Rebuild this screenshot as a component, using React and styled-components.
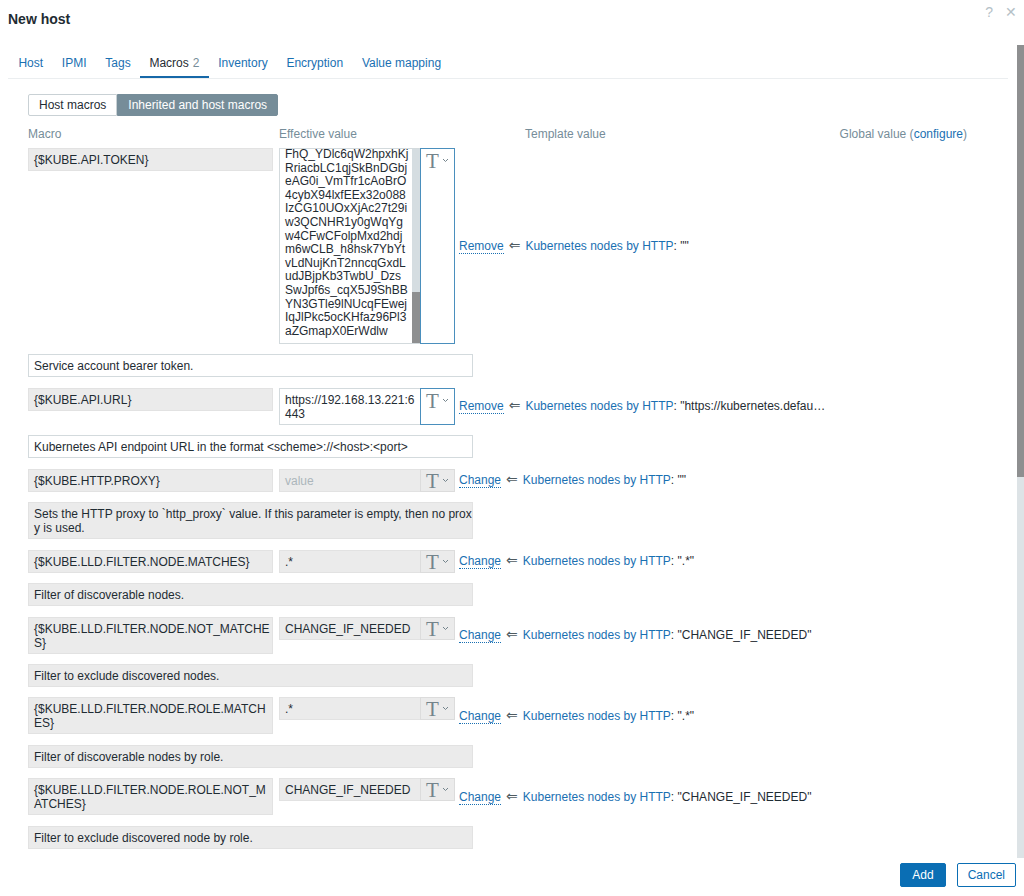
import React from "react";
import styled, { createGlobalStyle } from "styled-components";

const GlobalStyle = createGlobalStyle`
  html, body {
    margin: 0;
    padding: 0;
    background: #fff;
  }
  body {
    font-family: "Liberation Sans", Arial, sans-serif;
    font-size: 12px;
    color: #1f2c33;
  }
`;

const LINK = "#1a70b2";
const MUTED = "#768d99";

const Dialog = styled.div`
  width: 1024px;
  height: 896px;
  display: flex;
  flex-direction: column;
  overflow: hidden;
`;

const Header = styled.div`
  height: 45px;
  display: flex;
  justify-content: space-between;
  align-items: flex-start;
  padding: 10px 7px 0 8px;
  box-sizing: border-box;
`;

const Title = styled.h4`
  margin: 0;
  font-size: 14px;
  line-height: 18px;
  font-weight: bold;
  color: #1f2c33;
`;

const HeaderControls = styled.div`
  display: flex;
  gap: 12px;
  margin-top: -6px;
  color: #b5c1c7;
  font-size: 14px;
  line-height: 16px;
`;

const Body = styled.div`
  height: 813px;
  display: flex;
  padding-left: 8px;
`;

const Content = styled.div`
  flex: 1;
  overflow: hidden;
`;

const ScrollTrack = styled.div`
  width: 7px;
  margin-left: 9px;
  background: #dde3e6;
  display: flex;
  flex-direction: column;
`;

const ScrollThumb = styled.div`
  height: ${(p) => p.$size}px;
  background: #8e8f90;
`;

const Tabs = styled.ul`
  list-style: none;
  margin: 0;
  padding: 0 0 0 1px;
  height: 33px;
  display: flex;
  border-bottom: 1px solid #ebeef0;
`;

const Tab = styled.li`
  padding: 11px 9.4px 0;
  line-height: 14px;
  height: 20px;
  color: ${(p) => (p.$active ? "#1f2c33" : LINK)};
  border-bottom: 2px solid ${(p) => (p.$active ? "#1668a8" : "transparent")};
`;

const Counter = styled.span`
  color: ${MUTED};
  margin-left: 4px;
`;

const Form = styled.div`
  padding: 15px 0 0 20px;
`;

const Segmented = styled.div`
  display: flex;
`;

const SegButton = styled.div`
  height: 22px;
  box-sizing: border-box;
  padding: 0 10px;
  line-height: 20px;
  border: 1px solid ${(p) => (p.$on ? MUTED : "#c9d1d5")};
  background: ${(p) => (p.$on ? MUTED : "#fff")};
  color: ${(p) => (p.$on ? "#fff" : "#1f2c33")};
  border-radius: ${(p) => (p.$first ? "2px 0 0 2px" : "0 2px 2px 0")};
`;

const ColumnHeads = styled.div`
  display: grid;
  grid-template-columns: 251px 246px 1fr auto;
  margin: 11px 41px 7px 0;
  line-height: 14px;
  color: ${MUTED};
`;

const List = styled.div`
  display: flex;
  flex-direction: column;
  gap: 10.45px;
`;

const Row = styled.div`
  display: flex;
  align-items: flex-start;
`;

const Field = styled.div`
  box-sizing: border-box;
  padding: 4px 5px 3px;
  line-height: 14px;
  border: 1px solid ${(p) => (p.$readonly ? "#e2e2e2" : "#d3dadd")};
  background: ${(p) => (p.$readonly ? "#ebebeb" : "#fff")};
  white-space: pre;
  color: ${(p) => (p.$placeholder ? "#acb6bb" : "#1f2c33")};
`;

const MacroName = styled(Field)`
  width: 245px;
`;

const Description = styled(Field)`
  width: 445px;
`;

const ValueGroup = styled.div`
  display: flex;
  width: 176px;
  margin-left: 6px;
`;

const ValueInput = styled(Field)`
  flex: 1;
  border-right: none;
`;

const TextArea = styled.div`
  flex: 1;
  height: 196px;
  box-sizing: border-box;
  border: 1px solid #d3dadd;
  border-right: none;
  display: flex;
  overflow: hidden;
`;

const AreaText = styled.div`
  flex: 1;
  padding-left: 5px;
  margin-top: -1px;
  line-height: 13.6px;
  white-space: pre;
  overflow: hidden;
`;

const AreaScroll = styled.div`
  width: 8px;
  background: #d5dde1;
  display: flex;
  flex-direction: column;
  justify-content: flex-end;
`;

const AreaThumb = styled.div`
  height: 51px;
  background: #8e8f90;
`;

const TypeButton = styled.div`
  width: 35px;
  box-sizing: border-box;
  display: flex;
  align-items: flex-start;
  justify-content: center;
  gap: 3px;
  padding-top: ${(p) => (p.$active ? "2px" : "1px")};
  border: 1px solid ${(p) => (p.$active ? "#4a8fbd" : "#dcdcdc")};
  background: ${(p) => (p.$active ? "#fff" : "#ebebeb")};
  height: ${(p) => (p.$active ? "auto" : "23px")};
  align-self: stretch;
`;

const TypeGlyph = styled.span`
  font-family: "Liberation Serif", "Times New Roman", serif;
  font-size: 21px;
  line-height: 20px;
  color: #74848c;
`;

const Action = styled.div`
  align-self: center;
  margin-left: 4px;
  display: flex;
  align-items: baseline;
  white-space: nowrap;
  line-height: 16px;
`;

const DottedLink = styled.span`
  color: ${LINK};
  border-bottom: 1px dotted ${LINK};
  line-height: 14px;
`;

const Arrow = styled.span`
  margin: 0 5px 0 5px;
  font-family: "DejaVu Sans", sans-serif;
  font-size: 14px;
  line-height: 14px;
  color: #4f5b61;
`;

const Link = styled.span`
  color: ${LINK};
`;

const Footer = styled.div`
  display: flex;
  justify-content: flex-end;
  gap: 11px;
  padding: 5px 8px 0 0;
`;

const Button = styled.div`
  height: 24px;
  box-sizing: border-box;
  padding: 0 ${(p) => (p.$primary ? "11px" : "10px")};
  line-height: 22px;
  border-radius: 2px;
  border: 1px solid #0a6eb4;
  background: ${(p) => (p.$primary ? "#0a6eb4" : "#fff")};
  color: ${(p) => (p.$primary ? "#fff" : "#0a6eb4")};
`;

const Chevron = () => (
  <svg width="7" height="5" viewBox="0 0 7 5" style={{ marginTop: 7 }}>
    <path d="M1 1l2.5 2.5L6 1" fill="none" stroke="#74848c" strokeWidth="1" />
  </svg>
);

const token = [
  "FhQ_YDlc6qW2hpxhKj",
  "RriacbLC1qjSkBnDGbj",
  "eAG0i_VmTfr1cAoBrO",
  "4cybX94lxfEEx32o088",
  "IzCG10UOxXjAc27t29i",
  "w3QCNHR1y0gWqYg",
  "w4CFwCFolpMxd2hdj",
  "m6wCLB_h8hsk7YbYt",
  "vLdNujKnT2nncqGxdL",
  "udJBjpKb3TwbU_Dzs",
  "SwJpf6s_cqX5J9ShBB",
  "YN3GTle9lNUcqFEwej",
  "IqJlPkc5ocKHfaz96Pl3",
  "aZGmapX0ErWdlw",
];

const macros = [
  {
    name: "{$KUBE.API.TOKEN}",
    area: token,
    action: "Remove",
    template: '""',
    desc: "Service account bearer token.",
    own: true,
  },
  {
    name: "{$KUBE.API.URL}",
    value: "https://192.168.13.221:6\n443",
    action: "Remove",
    template: '"https://kubernetes.defau…',
    desc: "Kubernetes API endpoint URL in the format <scheme>://<host>:<port>",
    own: true,
  },
  {
    name: "{$KUBE.HTTP.PROXY}",
    value: "",
    action: "Change",
    template: '""',
    desc: "Sets the HTTP proxy to `http_proxy` value. If this parameter is empty, then no prox\ny is used.",
  },
  {
    name: "{$KUBE.LLD.FILTER.NODE.MATCHES}",
    value: ".*",
    action: "Change",
    template: '".*"',
    desc: "Filter of discoverable nodes.",
  },
  {
    name: "{$KUBE.LLD.FILTER.NODE.NOT_MATCHE\nS}",
    value: "CHANGE_IF_NEEDED",
    action: "Change",
    template: '"CHANGE_IF_NEEDED"',
    desc: "Filter to exclude discovered nodes.",
  },
  {
    name: "{$KUBE.LLD.FILTER.NODE.ROLE.MATCH\nES}",
    value: ".*",
    action: "Change",
    template: '".*"',
    desc: "Filter of discoverable nodes by role.",
  },
  {
    name: "{$KUBE.LLD.FILTER.NODE.ROLE.NOT_M\nATCHES}",
    value: "CHANGE_IF_NEEDED",
    action: "Change",
    template: '"CHANGE_IF_NEEDED"',
    desc: "Filter to exclude discovered node by role.",
  },
];

function MacroEntry({ m }) {
  return (
    <>
      <Row>
        <MacroName $readonly>{m.name}</MacroName>
        <ValueGroup>
          {m.area ? (
            <TextArea>
              <AreaText>{m.area.join("\n")}</AreaText>
              <AreaScroll>
                <AreaThumb />
              </AreaScroll>
            </TextArea>
          ) : (
            <ValueInput
              $readonly={!m.own}
              $placeholder={m.value === ""}
            >
              {m.value === "" ? "value" : m.value}
            </ValueInput>
          )}
          <TypeButton $active={m.own}>
            <TypeGlyph>T</TypeGlyph>
            <Chevron />
          </TypeButton>
        </ValueGroup>
        <Action>
          <DottedLink>{m.action}</DottedLink>
          <Arrow>⇐</Arrow>
          <Link>Kubernetes nodes by HTTP</Link>
          <span>: {m.template}</span>
        </Action>
      </Row>
      <Description $readonly={!m.own}>{m.desc}</Description>
    </>
  );
}

export default function App() {
  const tabs = ["Host", "IPMI", "Tags", "Macros", "Inventory", "Encryption", "Value mapping"];
  return (
    <Dialog>
      <GlobalStyle />
      <Header>
        <Title>New host</Title>
        <HeaderControls>
          <span>?</span>
          <span>✕</span>
        </HeaderControls>
      </Header>
      <Body>
        <Content>
          <Tabs>
            {tabs.map((t) => (
              <Tab key={t} $active={t === "Macros"}>
                {t}
                {t === "Macros" && <Counter>2</Counter>}
              </Tab>
            ))}
          </Tabs>
          <Form>
            <Segmented>
              <SegButton $first>Host macros</SegButton>
              <SegButton $on>Inherited and host macros</SegButton>
            </Segmented>
            <ColumnHeads>
              <span>Macro</span>
              <span>Effective value</span>
              <span>Template value</span>
              <span>
                Global value (<Link>configure</Link>)
              </span>
            </ColumnHeads>
            <List>
              {macros.map((m) => (
                <MacroEntry key={m.name} m={m} />
              ))}
            </List>
          </Form>
        </Content>
        <ScrollTrack>
          <ScrollThumb $size={432} />
        </ScrollTrack>
      </Body>
      <Footer>
        <Button $primary>Add</Button>
        <Button>Cancel</Button>
      </Footer>
    </Dialog>
  );
}
